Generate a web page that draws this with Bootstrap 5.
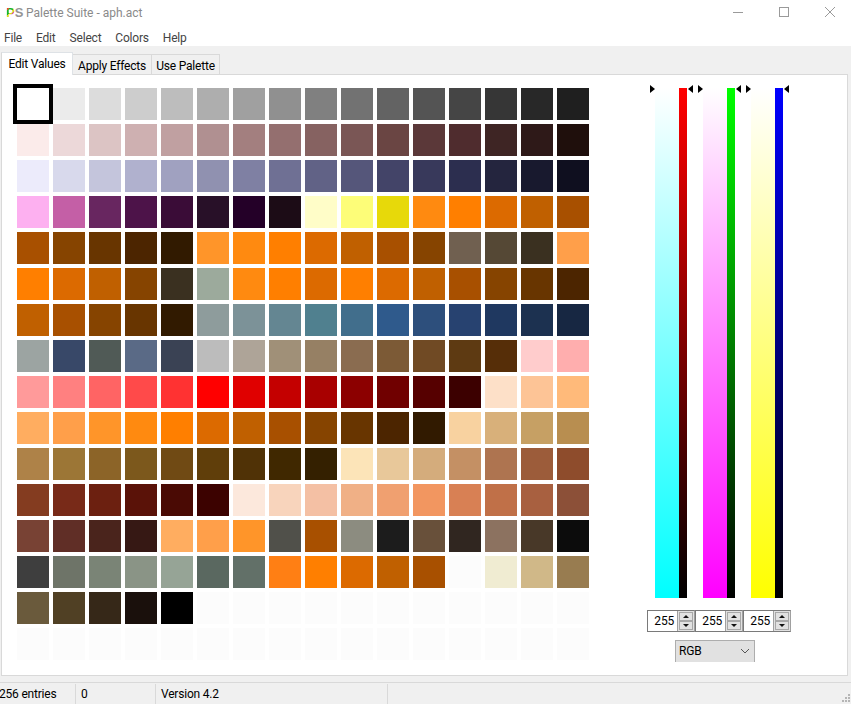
<!DOCTYPE html>
<html lang="en">
<head>
<meta charset="utf-8">
<title>Palette Suite - aph.act</title>
<link href="https://cdn.jsdelivr.net/npm/bootstrap@5.3.0/dist/css/bootstrap.min.css" rel="stylesheet">
<style>
html,body{height:100%;margin:0;overflow:hidden}
body{font-family:Roboto,"Open Sans","Liberation Sans",sans-serif;font-size:12px;letter-spacing:-.2px;color:#000;background:#f0f0f0;width:851px;height:704px;line-height:16px}
.win-title{height:30px;background:#fff;padding:0 0 6px 6px;width:853px}
.logo-mark{font:bold 13px/13px "Liberation Sans",sans-serif;width:15px;letter-spacing:0}
.logo-p{background:linear-gradient(135deg,#e8502a 0 25%,#18b52c 25% 50%,#d9d81e 50% 62%,#d63aa8 62% 78%,#2a56d6 78%);-webkit-background-clip:text;background-clip:text;color:transparent}
.logo-s{color:#959595}
.win-name{color:#8a8a8a;font-size:12px;margin:2px 0 0 5px;letter-spacing:0}
.win-ctl{width:46px;height:24px}
.win-menu{height:16px;background:#fff;padding-left:4px;gap:14px;color:#444}
.tabs-bar{height:28px;padding-left:1px;border:0;align-items:flex-end;flex-wrap:nowrap}
.tabs-bar .nav-link{border:1px solid #d9d9d9;border-bottom:0;border-left:0;border-radius:0;height:20px;width:79px;padding:3px 0 0;text-align:center;color:#000;background:#f0f0f0;line-height:16px;margin:0}
.tabs-bar .tab-last{width:68px}
.tabs-bar .nav-link.active{height:23px;width:72px;border-left:1px solid #d9d9d9;color:#000;background:#fff;padding:3px 0 0;position:relative;top:1px}
.work{height:603px;margin-left:1px;width:847px;background:#fff;border:1px solid #d9d9d9}
.swatches{display:grid;grid-template-columns:repeat(16,32px);grid-auto-rows:32px;gap:4px;margin:13px 0 0 15px;width:572px;height:572px}
.swatch-on{outline:4px solid #000}
.side-col{margin-left:61px;padding-top:10px;width:150px}
.bar-set{position:relative;height:513px}
.bar-unit{width:48px;padding-left:5px;position:relative;padding-top:3px}
.bar-a{width:24px;height:510px}
.bar-b{width:8px;height:510px}
.tip-l,.tip-r{position:absolute;top:0;width:0;height:0;border-style:solid}
.tip-r{left:0;border-width:4px 0 4px 5px;border-color:transparent transparent transparent #000}
.tip-l{left:38px;border-width:4px 5px 4px 0;border-color:transparent #000 transparent transparent}
.spin-row{margin-top:12px;margin-left:-3px}
.spin-box{width:48px;height:22px;border:1px solid #a0a0a0;border-left-color:#7a7a7a;border-top-color:#7a7a7a;border-bottom-color:#7a7a7a;background:#fff}
.spin-val{width:29px;text-align:right;padding-right:3px;line-height:20px}
.spin-ctl{width:17px;background:#e1e1e1;border-left:1px solid #a0a0a0;padding:1px}
.spin-btn{height:9px;background:#e1e1e1;border:1px solid #a8a8a8;position:relative;flex:1}
.spin-btn::after{content:"";position:absolute;left:3px;border-style:solid}
.spin-up::after{top:2px;border-width:0 3px 3px;border-color:transparent transparent #111}
.spin-dn::after{top:2px;border-width:3px 3px 0;border-color:#111 transparent transparent}
.mode-box{width:80px;height:22px;background:#e1e1e1;border:1px solid #adadad;border-bottom:0;margin:8px 0 0 25px;padding:0 4px 0 3px;line-height:20px}
.status-bar{height:22px;margin-top:6px;border-top:1px solid #d9d9d9;padding-top:1px;position:relative}
.st-cell{border-right:1px solid #d9d9d9;height:21px;line-height:21px;padding-left:5px}
.st-a{width:77px;padding-left:0;margin-left:-1px}
.st-b{width:80px}
.st-c{width:232px}
.grip{position:absolute;right:0;bottom:0}
</style>
</head>
<body class="d-flex flex-column">
<header class="win-title d-flex align-items-center">
  <div class="logo-mark d-flex"><span class="logo-p">P</span><span class="logo-s">S</span></div>
  <div class="win-name flex-grow-1">Palette Suite - aph.act</div>
  <div class="win-ctl d-flex align-items-center justify-content-center"><svg width="12" height="12"><path d="M1 6.5H11" stroke="#9a9a9a"/></svg></div>
  <div class="win-ctl d-flex align-items-center justify-content-center"><svg width="12" height="12"><rect x="1.5" y="1.5" width="9" height="9" fill="none" stroke="#9a9a9a"/></svg></div>
  <div class="win-ctl d-flex align-items-center justify-content-center"><svg width="12" height="12"><path d="M1 1L11 11M11 1L1 11" stroke="#9a9a9a"/></svg></div>
</header>
<nav class="win-menu d-flex align-items-center"><span>File</span><span>Edit</span><span>Select</span><span>Colors</span><span>Help</span></nav>
<ul class="nav nav-tabs tabs-bar">
  <li class="nav-item"><a class="nav-link active" href="#">Edit Values</a></li>
  <li class="nav-item"><a class="nav-link" href="#">Apply Effects</a></li>
  <li class="nav-item"><a class="nav-link tab-last" href="#">Use Palette</a></li>
</ul>
<main class="work d-flex">
  <div class="swatches" id="grid"><div class="swatch-on" style="background:#ffffff"></div><div style="background:#ebebeb"></div><div style="background:#dcdcdc"></div><div style="background:#cdcdcd"></div><div style="background:#bdbdbd"></div><div style="background:#aeaeae"></div><div style="background:#a0a0a0"></div><div style="background:#909090"></div><div style="background:#808080"></div><div style="background:#727272"></div><div style="background:#636363"></div><div style="background:#545454"></div><div style="background:#454545"></div><div style="background:#363636"></div><div style="background:#282828"></div><div style="background:#1f1f1f"></div><div style="background:#fbebea"></div><div style="background:#ecd8d9"></div><div style="background:#dcc4c4"></div><div style="background:#ceb0b1"></div><div style="background:#c0a0a1"></div><div style="background:#b09091"></div><div style="background:#a37f7f"></div><div style="background:#946f6f"></div><div style="background:#866261"></div><div style="background:#7a5655"></div><div style="background:#6a4543"></div><div style="background:#5b3839"></div><div style="background:#4f2c2e"></div><div style="background:#3e2524"></div><div style="background:#2e1918"></div><div style="background:#1f0f0c"></div><div style="background:#ecebfb"></div><div style="background:#d8d9ec"></div><div style="background:#c4c5dc"></div><div style="background:#b0b1ce"></div><div style="background:#a0a1c0"></div><div style="background:#9091b0"></div><div style="background:#7f80a3"></div><div style="background:#6f7094"></div><div style="background:#616286"></div><div style="background:#55567a"></div><div style="background:#434468"></div><div style="background:#38395b"></div><div style="background:#2c2e4f"></div><div style="background:#24253e"></div><div style="background:#18192e"></div><div style="background:#0f0f1f"></div><div style="background:#fdb0f0"></div><div style="background:#c45fa6"></div><div style="background:#682660"></div><div style="background:#4d1349"></div><div style="background:#3a0c37"></div><div style="background:#281028"></div><div style="background:#240028"></div><div style="background:#1c0c16"></div><div style="background:#fffdc8"></div><div style="background:#fdfd78"></div><div style="background:#e7d90a"></div><div style="background:#ff8a10"></div><div style="background:#ff7f00"></div><div style="background:#dc6a00"></div><div style="background:#c06000"></div><div style="background:#a85000"></div><div style="background:#a85000"></div><div style="background:#864400"></div><div style="background:#683500"></div><div style="background:#4c2500"></div><div style="background:#311a00"></div><div style="background:#ff9529"></div><div style="background:#ff8a10"></div><div style="background:#ff7f00"></div><div style="background:#dc6a00"></div><div style="background:#c06000"></div><div style="background:#a85000"></div><div style="background:#864400"></div><div style="background:#706050"></div><div style="background:#554835"></div><div style="background:#3a3020"></div><div style="background:#ff9f4a"></div><div style="background:#ff7f00"></div><div style="background:#dc6a00"></div><div style="background:#c06000"></div><div style="background:#864400"></div><div style="background:#3a3020"></div><div style="background:#9caa9c"></div><div style="background:#ff8a10"></div><div style="background:#ff7f00"></div><div style="background:#dc6a00"></div><div style="background:#ff7f00"></div><div style="background:#dc6a00"></div><div style="background:#c06000"></div><div style="background:#a85000"></div><div style="background:#864400"></div><div style="background:#683500"></div><div style="background:#4c2500"></div><div style="background:#c06000"></div><div style="background:#a85000"></div><div style="background:#864400"></div><div style="background:#683500"></div><div style="background:#311a00"></div><div style="background:#8e9c9c"></div><div style="background:#7c9298"></div><div style="background:#648692"></div><div style="background:#50808f"></div><div style="background:#416e8c"></div><div style="background:#2f5a8c"></div><div style="background:#2d4f7c"></div><div style="background:#274270"></div><div style="background:#1f3860"></div><div style="background:#1c3150"></div><div style="background:#172742"></div><div style="background:#9ca4a2"></div><div style="background:#384868"></div><div style="background:#505a56"></div><div style="background:#5a6a86"></div><div style="background:#3a4254"></div><div style="background:#bcbcbc"></div><div style="background:#aea498"></div><div style="background:#a09078"></div><div style="background:#968064"></div><div style="background:#8a6c50"></div><div style="background:#7c5a36"></div><div style="background:#704a24"></div><div style="background:#5e3a12"></div><div style="background:#562e08"></div><div style="background:#ffcccc"></div><div style="background:#ffaeae"></div><div style="background:#ff9a9a"></div><div style="background:#ff8080"></div><div style="background:#ff6464"></div><div style="background:#ff4a4a"></div><div style="background:#ff3232"></div><div style="background:#ff0000"></div><div style="background:#e00000"></div><div style="background:#c40000"></div><div style="background:#a80000"></div><div style="background:#8c0000"></div><div style="background:#700000"></div><div style="background:#560000"></div><div style="background:#3c0000"></div><div style="background:#fde0c8"></div><div style="background:#fdc496"></div><div style="background:#ffba7a"></div><div style="background:#ffad60"></div><div style="background:#ff9f4a"></div><div style="background:#ff9529"></div><div style="background:#ff8a10"></div><div style="background:#ff7f00"></div><div style="background:#dc6a00"></div><div style="background:#c06000"></div><div style="background:#a85000"></div><div style="background:#864400"></div><div style="background:#683500"></div><div style="background:#4c2500"></div><div style="background:#311a00"></div><div style="background:#f8d2a0"></div><div style="background:#d8b07a"></div><div style="background:#c6a064"></div><div style="background:#b88e50"></div><div style="background:#ae8248"></div><div style="background:#9c7636"></div><div style="background:#8c6428"></div><div style="background:#7c581c"></div><div style="background:#704a14"></div><div style="background:#603e0a"></div><div style="background:#503206"></div><div style="background:#402800"></div><div style="background:#342000"></div><div style="background:#fce4b8"></div><div style="background:#e8c89a"></div><div style="background:#d4ac7c"></div><div style="background:#c49064"></div><div style="background:#ae7450"></div><div style="background:#9c5c3a"></div><div style="background:#8e4c2c"></div><div style="background:#843c20"></div><div style="background:#782a18"></div><div style="background:#6c2010"></div><div style="background:#5a1208"></div><div style="background:#4a0a04"></div><div style="background:#3c0200"></div><div style="background:#fce8dc"></div><div style="background:#f8d4bc"></div><div style="background:#f4c0a4"></div><div style="background:#f0b086"></div><div style="background:#f0a070"></div><div style="background:#f29660"></div><div style="background:#d88054"></div><div style="background:#c07048"></div><div style="background:#a86040"></div><div style="background:#8c5038"></div><div style="background:#784234"></div><div style="background:#602e26"></div><div style="background:#4a241c"></div><div style="background:#361814"></div><div style="background:#ffad60"></div><div style="background:#ff9f4a"></div><div style="background:#ff9529"></div><div style="background:#50504a"></div><div style="background:#a85000"></div><div style="background:#8c8c80"></div><div style="background:#1c1c1c"></div><div style="background:#68503a"></div><div style="background:#302620"></div><div style="background:#8c7260"></div><div style="background:#483828"></div><div style="background:#0c0c0c"></div><div style="background:#3e3e3e"></div><div style="background:#6e7468"></div><div style="background:#7a8476"></div><div style="background:#8a9486"></div><div style="background:#96a496"></div><div style="background:#5a6860"></div><div style="background:#627068"></div><div style="background:#ff7f14"></div><div style="background:#ff7f00"></div><div style="background:#dc6a00"></div><div style="background:#c06000"></div><div style="background:#a85000"></div><div style="background:#fcfcfc"></div><div style="background:#f0ecd2"></div><div style="background:#d0b888"></div><div style="background:#987c50"></div><div style="background:#6a5a3c"></div><div style="background:#504024"></div><div style="background:#362818"></div><div style="background:#1a100c"></div><div style="background:#000000"></div><div style="background:#fcfcfc"></div><div style="background:#fcfcfc"></div><div style="background:#fcfcfc"></div><div style="background:#fcfcfc"></div><div style="background:#fcfcfc"></div><div style="background:#fcfcfc"></div><div style="background:#fcfcfc"></div><div style="background:#fcfcfc"></div><div style="background:#fcfcfc"></div><div style="background:#fcfcfc"></div><div style="background:#fcfcfc"></div><div style="background:#fcfcfc"></div><div style="background:#fcfcfc"></div><div style="background:#fcfcfc"></div><div style="background:#fcfcfc"></div><div style="background:#fcfcfc"></div><div style="background:#fcfcfc"></div><div style="background:#fcfcfc"></div><div style="background:#fcfcfc"></div><div style="background:#fcfcfc"></div><div style="background:#fcfcfc"></div><div style="background:#fcfcfc"></div><div style="background:#fcfcfc"></div><div style="background:#fcfcfc"></div><div style="background:#fcfcfc"></div><div style="background:#fcfcfc"></div><div style="background:#fcfcfc"></div></div>
  <div class="side-col">
    <div class="bar-set d-flex">
      <div class="bar-unit d-flex"><i class="tip-r"></i><i class="tip-l"></i><div class="bar-a" style="background:linear-gradient(#fff,#0ff)"></div><div class="bar-b" style="background:linear-gradient(#f00,#000)"></div></div>
      <div class="bar-unit d-flex"><i class="tip-r"></i><i class="tip-l"></i><div class="bar-a" style="background:linear-gradient(#fff,#f0f)"></div><div class="bar-b" style="background:linear-gradient(#0f0,#000)"></div></div>
      <div class="bar-unit d-flex"><i class="tip-r"></i><i class="tip-l"></i><div class="bar-a" style="background:linear-gradient(#fff,#ff0)"></div><div class="bar-b" style="background:linear-gradient(#00f,#000)"></div></div>
    </div>
    <div class="spin-row d-flex">
      <div class="spin-box d-flex"><div class="spin-val">255</div><div class="spin-ctl d-flex flex-column"><div class="spin-btn spin-up"></div><div class="spin-btn spin-dn"></div></div></div>
      <div class="spin-box d-flex"><div class="spin-val">255</div><div class="spin-ctl d-flex flex-column"><div class="spin-btn spin-up"></div><div class="spin-btn spin-dn"></div></div></div>
      <div class="spin-box d-flex"><div class="spin-val">255</div><div class="spin-ctl d-flex flex-column"><div class="spin-btn spin-up"></div><div class="spin-btn spin-dn"></div></div></div>
    </div>
    <div class="mode-box d-flex justify-content-between align-items-center"><span>RGB</span><svg width="10" height="6"><path d="M1 1L5 5L9 1" fill="none" stroke="#555"/></svg></div>
  </div>
</main>
<footer class="status-bar d-flex">
  <div class="st-cell st-a">256 entries</div>
  <div class="st-cell st-b">0</div>
  <div class="st-cell st-c">Version 4.2</div>
  <svg class="grip" width="12" height="12"><path d="M9 2h2v2H9zM6 5h2v2H6zM9 5h2v2H9zM3 8h2v2H3zM6 8h2v2H6zM9 8h2v2H9z" fill="#b5b5b5"/></svg>
</footer>
<script src="https://cdn.jsdelivr.net/npm/bootstrap@5.3.0/dist/js/bootstrap.bundle.min.js"></script>
</body>
</html>
